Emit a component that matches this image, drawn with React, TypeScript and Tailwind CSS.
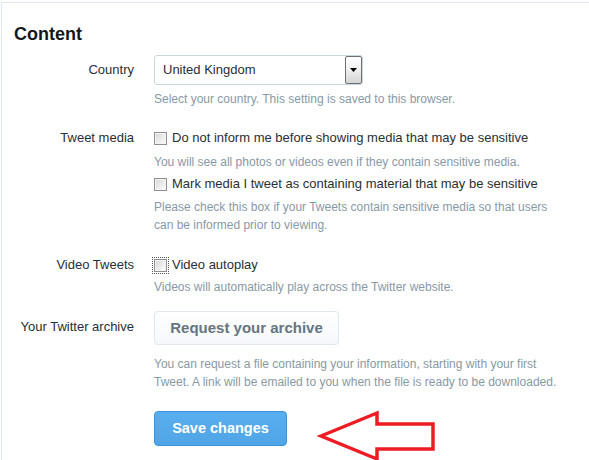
import React from 'react';

const Checkbox = ({ focused = false }: { focused?: boolean }) => (
  <span
    className={`inline-block w-[13px] h-[13px] shrink-0 border border-[#8e8f8f] bg-gradient-to-br from-[#d6d6d6] to-white shadow-[inset_0_0_0_1px_#f4f4f4] ${
      focused ? 'outline outline-1 outline-dotted outline-[#555] outline-offset-1' : ''
    }`}
  />
);

const Help = ({ children, className = '' }: { children: React.ReactNode; className?: string }) => (
  <p className={`text-[12px] leading-[18px] text-[#8899a6] ${className}`}>{children}</p>
);

export default function App() {
  return (
    <div className="relative min-h-screen bg-white font-['Liberation_Sans',Arial,sans-serif] text-[#292f33]">
      <div className="ml-px mt-[2px] min-h-[458px] border-l border-t border-[#e1e8ed]">
        <h2 className="pl-3 pt-[19px] text-[18px] leading-6 font-bold text-[#14171a]">Content</h2>

        <div className="mt-[9px]">
          {/* Country */}
          <div className="flex gap-5">
            <div className="w-[132px] shrink-0 text-right text-[13px] leading-[30px]">Country</div>
            <div className="max-w-[415px]">
              <div className="flex h-[30px] w-[209px] items-center rounded-[3px] border border-[#ccd6dd] pl-2 pr-0">
                <span className="text-[13px]">United Kingdom</span>
                <span className="ml-auto flex h-[28px] w-[17px] items-start justify-center rounded-[2px] border border-[#707070] bg-gradient-to-b from-white via-[#f0f0f0] to-[#d4d4d4] pt-[11px]">
                  <svg width="7" height="4" viewBox="0 0 7 4">
                    <polygon points="0,0 7,0 3.5,4" fill="#000" />
                  </svg>
                </span>
              </div>
              <Help className="mt-[5px]">Select your country. This setting is saved to this browser.</Help>
            </div>
          </div>

          {/* Tweet media */}
          <div className="mt-5 flex gap-5">
            <div className="w-[132px] shrink-0 text-right text-[13px] leading-5">Tweet media</div>
            <div className="max-w-[415px]">
              <label className="flex h-5 items-center gap-[5px] text-[13px]">
                <Checkbox />
                Do not inform me before showing media that may be sensitive
              </label>
              <Help className="mt-[5px]">You will see all photos or videos even if they contain sensitive media.</Help>
              <label className="mt-[3px] flex h-5 items-center gap-[5px] text-[13px]">
                <Checkbox />
                Mark media I tweet as containing material that may be sensitive
              </label>
              <Help className="mt-[4px]">
                Please check this box if your Tweets contain sensitive media so that users can be informed prior to
                viewing.
              </Help>
            </div>
          </div>

          {/* Video Tweets */}
          <div className="mt-[21px] flex gap-5">
            <div className="w-[132px] shrink-0 text-right text-[13px] leading-5">Video Tweets</div>
            <div className="max-w-[415px]">
              <label className="flex h-5 items-center gap-[5px] text-[13px]">
                <Checkbox focused />
                Video autoplay
              </label>
              <Help className="mt-[3px]">Videos will automatically play across the Twitter website.</Help>
            </div>
          </div>

          {/* Archive */}
          <div className="mt-[15px] flex gap-5">
            <div className="w-[132px] shrink-0 text-right text-[13px] leading-[32px]">Your Twitter archive</div>
            <div className="max-w-[415px]">
              <button className="h-[34px] w-[185px] rounded-[4px] border border-[#e1e8ed] bg-gradient-to-b from-white to-[#f5f8fa] text-[15px] font-bold text-[#66757f]">
                Request your archive
              </button>
              <Help className="mt-[10px]">
                You can request a file containing your information, starting with your first Tweet. A link will be
                emailed to you when the file is ready to be downloaded.
              </Help>
              <button className="mt-5 h-[35px] w-[133px] rounded-[4px] border border-[#3b94d9] bg-gradient-to-b from-[#58aeee] to-[#4fa5e6] text-[14.5px] font-bold text-white">
                Save changes
              </button>
            </div>
          </div>
        </div>
      </div>

      {/* annotation arrow */}
      <svg className="pointer-events-none absolute left-0 top-0" width="589" height="460" viewBox="0 0 589 460">
        <polygon
          points="321,434 377,411 377,422 433,422 433,447 377,447 377,457"
          fill="none"
          stroke="#ed1c24"
          strokeWidth="3.5"
          strokeLinejoin="miter"
        />
      </svg>
    </div>
  );
}
